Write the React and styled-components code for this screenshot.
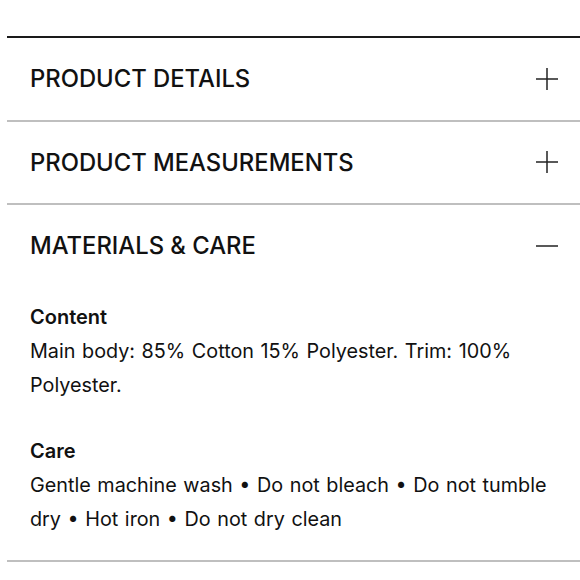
import React, { useState } from 'react';
import styled, { createGlobalStyle } from 'styled-components';

const GlobalStyle = createGlobalStyle`
  html, body {
    margin: 0;
    padding: 0;
    background: #fff;
  }
  body {
    font-family: Inter, "Noto Sans", sans-serif;
    color: #111;
    overflow: hidden;
  }
`;

const sections = [
  { title: 'PRODUCT DETAILS', body: null },
  { title: 'PRODUCT MEASUREMENTS', body: null },
  {
    title: 'MATERIALS & CARE',
    body: [
      { label: 'Content', items: ['Main body: 85% Cotton 15% Polyester. Trim: 100% Polyester.'] },
      { label: 'Care', items: ['Gentle machine wash', 'Do not bleach', 'Do not tumble dry', 'Hot iron', 'Do not dry clean'] },
    ],
  },
];

function ToggleIcon({ open }) {
  return (
    <svg width="24" height="24" viewBox="0 0 24 24" fill="none" stroke="#222" strokeWidth="1.5">
      <line x1="1" y1="12" x2="23" y2="12" />
      {!open && <line x1="12" y1="1" x2="12" y2="23" />}
    </svg>
  );
}

function App() {
  const [open, setOpen] = useState(2);
  return (
    <>
      <GlobalStyle />
      <Page>
        <Accordion>
          {sections.map((s, i) => (
            <Item key={s.title}>
              <Header onClick={() => setOpen(open === i ? -1 : i)}>
                <Title>{s.title}</Title>
                <ToggleIcon open={open === i} />
              </Header>
              {open === i && s.body && (
                <Body>
                  {s.body.map((b) => (
                    <Block key={b.label}>
                      <Label>{b.label}</Label>
                      <Text>{b.items.join(' \u2022 ')}</Text>
                    </Block>
                  ))}
                </Body>
              )}
            </Item>
          ))}
        </Accordion>
      </Page>
    </>
  );
}

const Page = styled.div`
  padding: 36px 0 0 7px;
  width: 600px;
`;

const Accordion = styled.div`
  border-top: 2px solid #1a1a1a;
`;

const Item = styled.div`
  border-bottom: 2px solid #bfbfbf;
`;

const Header = styled.div`
  height: 81.5px;
  display: flex;
  align-items: center;
  justify-content: space-between;
  padding: 0 48px 0 23px;
  cursor: pointer;
`;

const Title = styled.h3`
  margin: 0;
  font-size: 23.8px;
  font-weight: 500;
`;

const Body = styled.div`
  padding: 13px 40px 24px 23px;
  display: flex;
  flex-direction: column;
  gap: 32px;
`;

const Block = styled.div``;

const Label = styled.div`
  font-size: 20px;
  font-weight: 600;
  line-height: 34px;
`;

const Text = styled.p`
  margin: 0;
  font-size: 19.8px;
  line-height: 34px;
  word-spacing: 1px;
`;

export default App;
